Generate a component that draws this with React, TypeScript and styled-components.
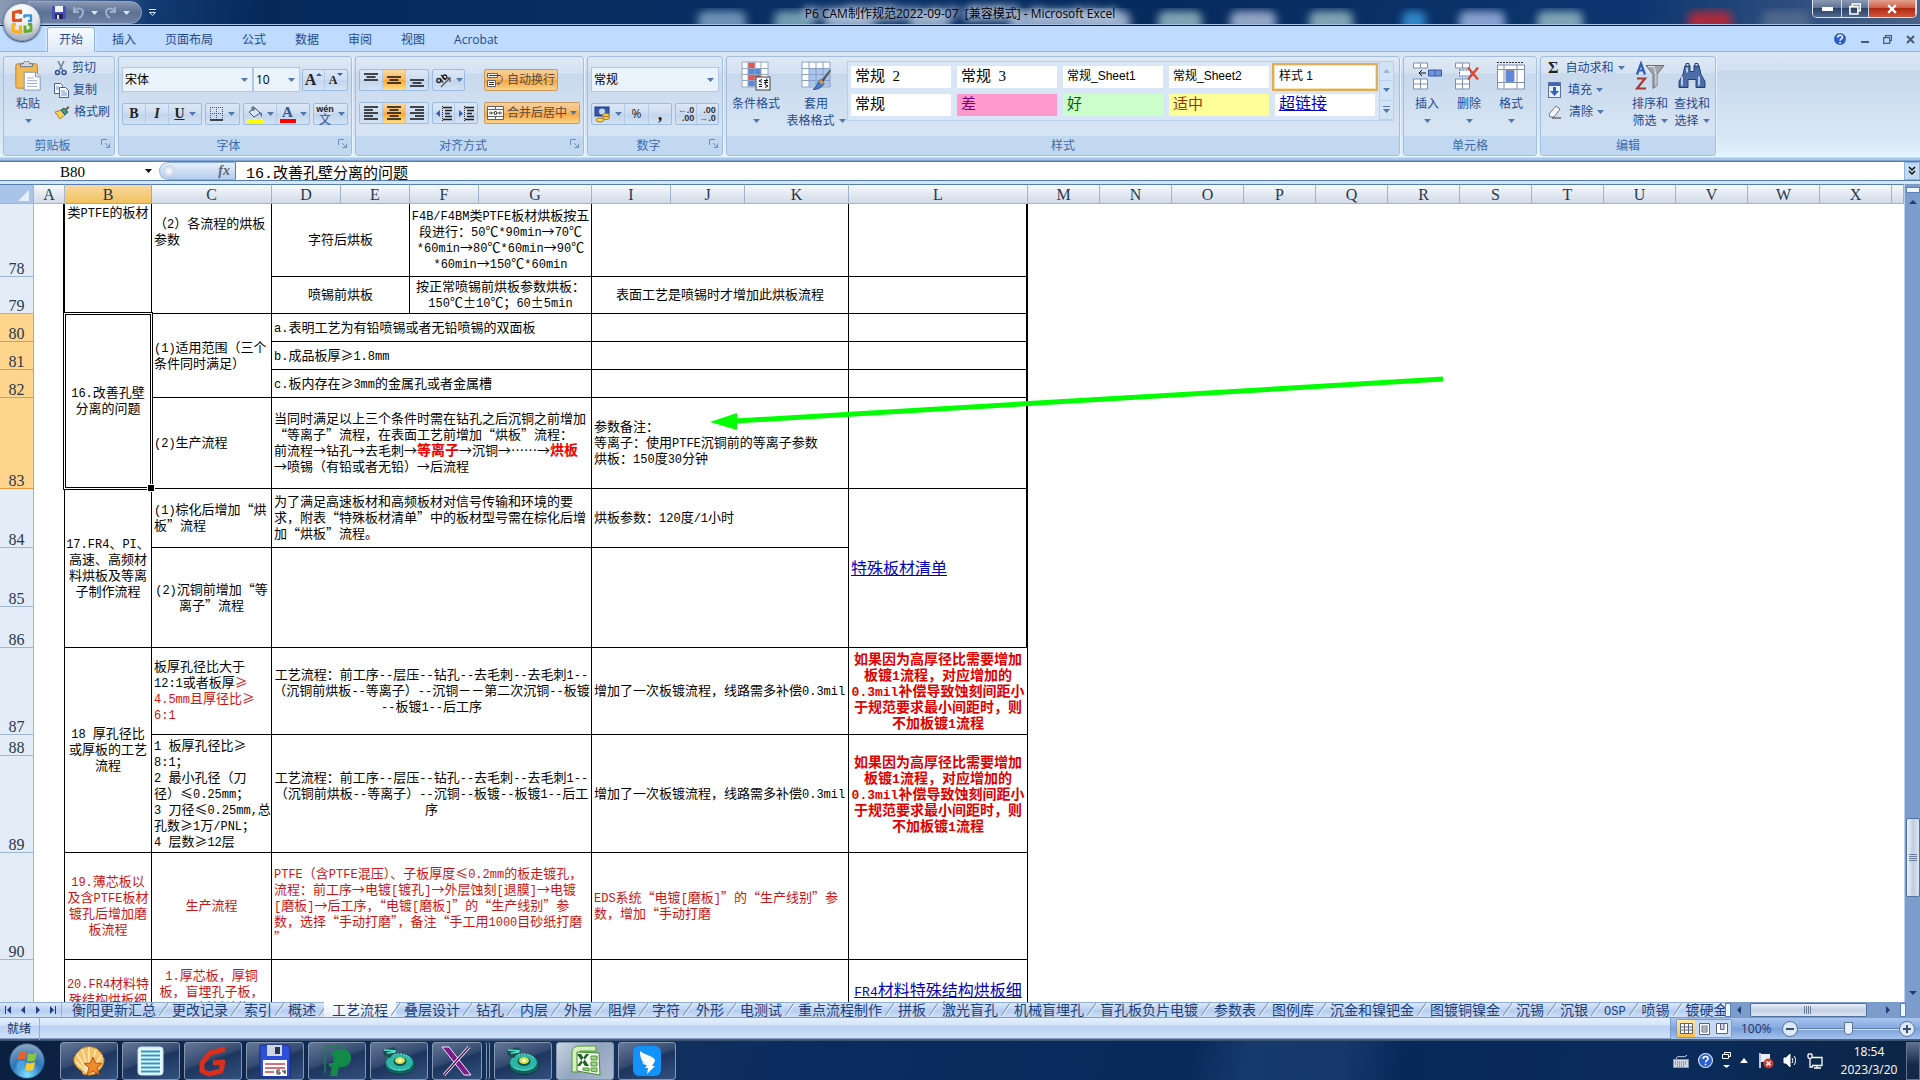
import React from "react";
import styled, { createGlobalStyle, css } from "styled-components";

const UI = `"Open Sans", "Noto Sans CJK SC", sans-serif`;
const SONG = `"Noto Sans CJK SC", sans-serif`;
const MONO = `"Liberation Mono", "Noto Sans CJK SC", monospace`;
const SERIF = `"Liberation Serif", "Noto Sans CJK SC", serif`;
const BLUE = "#1e4a94";

const Global = createGlobalStyle`
  * { box-sizing: border-box; }
  html, body, #root { height: 100%; }
  body { margin: 0; overflow: hidden; font: 12px/16px ${UI}; background: #fff; }
  button, input, select { font: inherit; color: inherit; margin: 0; padding: 0; border: 0; background: none; border-radius: 0; outline: 0; }
  button { cursor: default; }
  svg { display: block; flex: none; }
`;

const Screen = styled.div`
  height: 100vh;
  display: flex;
  flex-direction: column;
  overflow: hidden;
  white-space: nowrap;
`;

/* ---------- title bar ---------- */

const TitleBar = styled.header`
  position: relative;
  flex: none;
  height: 26px;
  display: flex;
  align-items: center;
  justify-content: center;
  overflow: hidden;
  background: linear-gradient(100deg, #8c9cb4 0, #5f789f 60px, #123a72 150px, #06295a 260px, #0b3066 45%, #072a5c 60%, #0c3570 85%, #4a6388 100%);
  border-bottom: 1px solid #10203a;
  box-shadow: inset 0 -1px #a9c4e4;
`;
const Blurs = styled.svg`
  position: absolute;
  inset: 0;
`;
const Title = styled.h1`
  position: relative;
  margin: 0;
  padding-top: 2px;
  font: 12px/16px ${UI};
  white-space: pre;
  color: #000;
  text-shadow: 0 0 6px #dfe8f4, 0 0 8px #c8d6ea, 0 0 12px #b5c7e0, 0 0 12px #b5c7e0;
`;
const QuickBar = styled.nav`
  position: absolute;
  left: 28px;
  top: 1px;
  height: 23px;
  width: 114px;
  padding-left: 23px;
  display: flex;
  align-items: center;
  gap: 6px;
  border: 1px solid #93a5c0;
  border-radius: 0 12px 12px 0;
  background: linear-gradient(#8797b3, #5d7194 50%, #6e82a4);
  color: #dbe5f3;
`;
const QuickMore = styled.button`
  position: absolute;
  left: 148px;
  top: 9px;
`;
const Bare = styled.button`
  display: flex;
  align-items: center;
  justify-content: center;
`;
const OfficeButton = styled.button`
  position: absolute;
  z-index: 3;
  left: 3px;
  top: 3px;
  width: 38px;
  height: 38px;
  display: grid;
  place-items: center;
  border-radius: 50%;
  border: 1px solid #7f8ea8;
  background: radial-gradient(circle at 50% 20%, #fff, #e3e7ee 50%, #a9b2c2 80%, #eef2f8);
  box-shadow: 0 1px 2px #1a2c4c;
`;
const WindowButtons = styled.div`
  position: absolute;
  right: 3px;
  top: 0;
  height: 18px;
  display: grid;
  grid-template-columns: 29px 27px 47px;
  border: 1px solid #dfe6f0;
  border-top: 0;
  border-radius: 0 0 5px 5px;
  overflow: hidden;
`;
const WinBtn = styled.button<{ $close?: boolean }>`
  display: grid;
  place-items: center;
  border-right: 1px solid #cbd5e4;
  background: ${(p) => (p.$close ? "linear-gradient(#e2a08f, #cf6048 45%, #b02a12 50%, #d0573c)" : "linear-gradient(#8a9ab4, #5e7293 45%, #2b4268 50%, #50688e)")};
`;

/* ---------- ribbon ---------- */

const TabRow = styled.nav`
  flex: none;
  height: 26px;
  display: flex;
  align-items: flex-end;
  gap: 5px;
  padding: 0 5px 0 47px;
  background: #bfdbff;
  color: ${BLUE};
  box-shadow: inset 0 -1px #8db2e3;
`;
const Tab = styled.button<{ $on?: boolean }>`
  height: 25px;
  border: 1px solid transparent;
  border-bottom: 0;
  padding: 0 11px;
  ${(p) =>
    p.$on &&
    css`
      border-color: #8db2e3;
      border-radius: 3px 3px 0 0;
      background: linear-gradient(#f7fbff, #dfeaf8);
      box-shadow: 0 0 3px #fff;
    `}
`;
const TabTools = styled.div`
  margin-left: auto;
  height: 26px;
  display: flex;
  align-items: center;
  gap: 14px;
  color: #4b5a72;
`;
const Ribbon = styled.section`
  flex: none;
  height: 110px;
  padding: 4px 3px 6px;
  display: flex;
  gap: 3px;
  color: ${BLUE};
  background: linear-gradient(#dbe6f4 0, #d2e0f1 18px, #c7d8ed 19px, #d9e8f6 88px, #e3f5fd 105px, #a9c6ea 106px, #a9c6ea 108px, #567db1 109px);
`;
const Group = styled.section<{ $w?: number }>`
  flex: ${(p) => (p.$w ? `0 1 ${p.$w}px` : "0 0 auto")};
  display: flex;
  flex-direction: column;
  border: 1px solid #a4bfde;
  border-radius: 3px;
  background: linear-gradient(#dfe9f5 0, #d4e1f1 16px, #c8d9ed 17px, #d8e5f4 78px);
  overflow: hidden;
  box-shadow: 1px 0 #e9f2fc;
`;
const GroupBody = styled.div<{ $gap?: number; $pad?: string }>`
  flex: 1;
  min-height: 0;
  display: flex;
  gap: ${(p) => p.$gap || 0}px;
  padding: ${(p) => p.$pad || "0"};
`;
const GroupName = styled.footer`
  flex: none;
  height: 19px;
  display: flex;
  align-items: center;
  background: #c1d8f0;
  color: #3e6aaa;
  svg { margin: 0 4px 4px 0; }
  span { flex: 1; text-align: center; }
`;
const Stack = styled.div<{ $gap?: number; $grow?: boolean }>`
  display: flex;
  flex-direction: column;
  gap: ${(p) => p.$gap || 0}px;
  ${(p) => p.$grow && "flex: 1;"}
`;
const Line = styled.div<{ $gap?: number; $h?: number; $between?: boolean }>`
  display: flex;
  align-items: center;
  gap: ${(p) => p.$gap || 0}px;
  ${(p) => p.$h && `height: ${p.$h}px;`}
  ${(p) => p.$between && "justify-content: space-between;"}
`;
const BigButton = styled.button<{ $w: number }>`
  width: ${(p) => p.$w}px;
  height: 76px;
  padding-top: 4px;
  display: flex;
  flex-direction: column;
  align-items: center;
  gap: 4px;
  > svg { height: 30px; margin-bottom: 2px; }
  i { flex: none; font-style: normal; display: flex; align-items: center; gap: 4px; height: 13px; line-height: 13px; }
`;
const SmallButton = styled.button`
  height: 22px;
  display: flex;
  align-items: center;
  gap: 4px;
`;
const Combo = styled.label<{ $w: number }>`
  width: ${(p) => p.$w}px;
  height: 25px;
  display: grid;
  align-items: center;
  border: 1px solid #b1c7e3;
  background: #eaf2fb;
  color: #000;
  select { grid-area: 1 / 1; appearance: none; width: 100%; height: 23px; padding: 0 2px; }
  svg { grid-area: 1 / 1; justify-self: end; margin-right: 4px; pointer-events: none; }
`;
const Buttons = styled.div`
  display: flex;
  height: 22px;
  border: 1px solid #9ebbe0;
  border-radius: 2px;
  background: linear-gradient(#dbe7f6, #cddcf0 50%, #c2d5ed 51%, #d3e2f4);
`;
const Tool = styled.button<{ $w: number; $on?: boolean }>`
  width: ${(p) => p.$w}px;
  display: flex;
  align-items: center;
  justify-content: center;
  gap: 4px;
  color: #222;
  &:not(:last-child) { border-right: 1px solid #b4cbe8; }
  ${(p) => p.$on && "background: linear-gradient(#fcd9a0, #fbb45a 50%, #fda530 51%, #fee08a);"}
`;
const SizeTool = styled(Tool)`
  gap: 0;
  svg { align-self: flex-start; margin-top: 3px; }
`;
const Glyph = styled.span<{ $size?: number; $italic?: boolean; $u?: boolean; $c?: string }>`
  font: ${(p) => (p.$italic ? "italic " : "")}bold ${(p) => p.$size || 14}px/16px ${SERIF};
  color: ${(p) => p.$c || "#222"};
  ${(p) => p.$u && "text-decoration: underline;"}
`;
const Ruby = styled.span`
  display: grid;
  justify-items: center;
  font: bold 9px/8px "Liberation Sans", sans-serif;
  b { font: 12px/11px ${SONG}; color: #2c4fa6; }
`;
const Toggle = styled.button`
  height: 22px;
  display: flex;
  align-items: center;
  gap: 3px;
  padding: 0 2px;
  border: 1px solid #c69b62;
  border-radius: 2px;
  background: linear-gradient(#f6cf9c, #f7b868 50%, #f5a540 51%, #fbd187);
  color: #5b4a3a;
`;
const VRule = styled.span`
  width: 1px;
  height: 56px;
  background: #9ebbe0;
`;
const Gallery = styled.div`
  flex: 1;
  height: 60px;
  margin-top: 4px;
  display: flex;
  border: 1px solid #b9d0ed;
  background: #d8e6f7;
`;
const Tiles = styled.div`
  flex: 1;
  display: grid;
  grid-template-columns: repeat(5, 1fr);
  grid-template-rows: 22px 22px;
  gap: 6px;
  padding: 4px 4px 3px 3px;
`;
const Tile = styled.button<{ $bg?: string; $c?: string; $size?: number; $on?: boolean; $u?: boolean }>`
  height: 22px;
  padding: 0 4px 2px;
  text-align: left;
  background: ${(p) => p.$bg || "#fff"};
  color: ${(p) => p.$c || "#000"};
  font: ${(p) => p.$size || 15}px/18px ${(p) => (p.$size === 12 ? `"Liberation Sans", ${SONG}` : SERIF)};
  word-spacing: normal;
  ${(p) => p.$u && "text-decoration: underline;"}
  ${(p) => p.$on && "box-shadow: 0 0 0 1px #fbe3b0, 0 0 0 3px #e3ab52;"}
`;
const GalleryScroll = styled.div`
  width: 14px;
  display: grid;
  grid-template-rows: repeat(3, 1fr);
  border-left: 1px solid #b9d0ed;
  button { display: grid; place-items: center; border-bottom: 1px solid #b9d0ed; background: #d3e3f6; }
`;

/* ---------- formula bar ---------- */

const FormulaBar = styled.div`
  flex: none;
  height: 22px;
  display: flex;
  padding-bottom: 4px;
  background: linear-gradient(#fff 18px, #567db1 18px, #567db1 19px, #d6e6fa 19px);
`;
const NameBox = styled.label`
  width: 159px;
  display: flex;
  align-items: center;
  input { width: 145px; height: 18px; padding: 2px 0 0 0; text-align: center; font: 15px/16px ${SERIF}; }
`;
const FxPill = styled.div`
  width: 77px;
  height: 18px;
  padding: 0 5px 0 3px;
  display: flex;
  align-items: center;
  justify-content: space-between;
  border-radius: 9px 0 0 9px;
  border: 1px solid #8db2e3;
  border-right-color: #567db1;
  background: linear-gradient(#e8f0fb, #b4cdec);
  &::before { content: ""; width: 12px; height: 12px; border-radius: 50%; background: radial-gradient(#fff, #a9bfdd); }
`;
const FormulaInput = styled.input`
  && { flex: 1; height: 18px; padding: 2px 0 0 10px; font: 15px/16px ${MONO}; }
`;
const Expand = styled.button`
  && { width: 16px; height: 18px; display: grid; place-items: center; background: #c3d8f1; border: 1px solid #8db2e3; }
`;

/* ---------- sheet ---------- */

const Work = styled.main`
  flex: 1;
  min-height: 0;
  display: flex;
`;
const GridArea = styled.div`
  position: relative;
  flex: 1;
  min-width: 0;
  overflow: hidden;
  background: #fff;
`;
const Sheet = styled.table`
  width: 100%;
  table-layout: fixed;
  border-collapse: separate;
  border-spacing: 0;
  font: 13px/16px ${SONG};
  color: #000;
`;
const ColHead = styled.th<{ $on?: boolean }>`
  height: 20px;
  padding: 2px 0 0;
  overflow: hidden;
  font: 16px/16px ${SERIF};
  color: #27384f;
  border: solid #9eb6ce;
  border-width: 1px 1px 1px 0;
  border-top-color: #567db1;
  background: ${(p) => (p.$on ? "linear-gradient(#f9d99f, #f1c15f)" : "linear-gradient(#f8fafc, #dfe6ef 60%, #d3dbe9)")};
  ${(p) => p.$on && "border-right-color: #f29536; border-bottom-color: #f29536;"}
`;
const Corner = styled(ColHead)`
  background: #a9c4e9;
  svg { margin: 0 4px 0 auto; }
`;
const RowHead = styled.th<{ $on?: boolean; $h: number }>`
  height: ${(p) => p.$h}px;
  padding: 0;
  vertical-align: bottom;
  font: 16px/15px ${SERIF};
  color: #27384f;
  border-right: 1px solid #9eb6ce;
  border-bottom: 1px solid #9eb6ce;
  background: #e4ecf7;
  ${(p) => p.$on && "background: #ffd58d; border-color: #f29536;"}
`;
const Cell = styled.td<{ $align?: string; $top?: number; $red?: boolean; $bold?: boolean; $thick?: boolean; $plain?: boolean }>`
  position: relative;
  padding: ${(p) => p.$top || 0}px 0 2px ${(p) => (p.$align === "center" ? 0 : 2)}px;
  text-align: ${(p) => p.$align || "left"};
  vertical-align: ${(p) => (p.$top !== undefined ? "top" : "middle")};
  border-right: 1px solid #000;
  border-bottom: 1px solid #000;
  white-space: pre;
  ${(p) => p.$red && "color: #cc1414;"}
  ${(p) => p.$bold && "font-weight: 700; font-size: 14px; color: #e00000;"}
  ${(p) => p.$thick && "border-right-width: 2px;"}
  ${(p) => p.$plain && "border-bottom: 0; border-right: 0;"}
`;
const Gutter = styled.td<{ $thick?: boolean }>`
  padding: 0;
  border-right: ${(p) => (p.$thick ? 2 : 1)}px solid #000;
`;
const Half = styled.span<{ $size: number }>`
  font-family: "Liberation Mono", monospace;
  font-size: ${(p) => p.$size}px;
  line-height: 1px;
`;
const Hot = styled.b`
  font-size: 14px;
  line-height: 1px;
  color: #f00000;
`;
const Red = styled.span`
  color: #cc1414;
`;
const CellLink = styled.a`
  font-size: 16px;
  line-height: 18px;
  color: #0000b8;
  text-decoration: underline;
`;
/* Double frame of the active range: dark, white, dark. */
const Selection = styled.div`
  position: absolute;
  z-index: 1;
  inset: -2px;
  border: 1px solid #000;
  box-shadow: inset 0 0 0 1px #fff, inset 0 0 0 2px #000;
  pointer-events: none;
  &::after { content: ""; position: absolute; right: -3px; bottom: -3px; width: 6px; height: 6px; background: #000; border: 1px solid #fff; }
`;
const Arrow = styled.svg`
  position: absolute;
  left: 710px;
  top: 190px;
  z-index: 2;
  pointer-events: none;
`;

const VScroll = styled.div`
  flex: none;
  width: 16px;
  display: flex;
  flex-direction: column;
  align-items: center;
  padding: 3px 0 5px;
  border-left: 1px solid #b8d0f0;
  background: #7c9dcc;
`;
const SplitMark = styled.span<{ $v?: boolean }>`
  flex: none;
  width: ${(p) => (p.$v ? 6 : 14)}px;
  height: ${(p) => (p.$v ? 14 : 6)}px;
  border: 1px solid #5d82b8;
  background: #f0f6ff;
`;
const Thumb = styled.button<{ $h?: boolean }>`
  && {
    display: grid;
    place-items: center;
    border: 1px solid #5170a0;
    border-radius: 2px;
    ${(p) =>
      p.$h
        ? "width: 117px; height: 14px; background: linear-gradient(#e9eff8, #c2cfe3 50%, #dbe4f1);"
        : "width: 14px; height: 79px; background: linear-gradient(90deg, #edf2fa, #bfcde2 50%, #dbe4f1);"}
  }
`;
const Space = styled.span<{ $n: number }>`
  flex: ${(p) => p.$n};
`;

const SheetTabs = styled.nav`
  flex: none;
  height: 16px;
  display: flex;
  background: linear-gradient(#8fb0de 1px, #dce9fa 1px, #b4cdf0 60%, #cfe0f7);
  border-bottom: 1px solid #7b9cc8;
  color: #1c3f7c;
`;
const NavArrows = styled.div`
  width: 62px;
  padding: 0 5px;
  display: flex;
  align-items: center;
  justify-content: space-between;
  border-right: 1px solid #8fb0de;
`;
const TabStrip = styled.div`
  flex: 1;
  min-width: 0;
  display: flex;
  overflow: hidden;
  padding-left: 2px;
`;
const SheetTab = styled.button<{ $on?: boolean }>`
  && {
    flex: none;
    position: relative;
    height: 15px;
    padding: 0 8px;
    font: 14px/15px ${SONG};
    ${(p) => p.$on && "background: linear-gradient(#fff, #e4eefb);"}
  }
  &::after { content: ""; position: absolute; right: 0; top: 0; width: 1px; height: 15px; background: #7b98c4; transform: rotate(35deg); box-shadow: 1px 0 #f4f9ff; }
`;
const HScroll = styled.div`
  flex: none;
  width: 195px;
  height: 15px;
  padding-right: 14px;
  display: flex;
  align-items: center;
  background: #7c9dcc;
`;

const StatusBar = styled.footer`
  flex: none;
  height: 22px;
  display: flex;
  align-items: stretch;
  background: linear-gradient(#e4effd 0, #d5e5fa 7px, #b9d1f3 8px, #cfe1f8 20px, #3f5f92 21px);
  color: #1c3566;
`;
const Ready = styled.span`
  width: 40px;
  padding: 3px 0 0 7px;
  border-right: 1px solid #90b0dc;
`;
const StatusRight = styled.div`
  margin-left: auto;
  width: 250px;
  height: 21px;
  display: flex;
  align-items: center;
  padding: 0 5px;
  border-left: 1px solid #7b9cc8;
  background: linear-gradient(#a8c5ef, #86abe0 45%, #7aa0d8 50%, #a3c2ee);
`;
const Views = styled.div`
  display: flex;
  border: 1px solid #7b9cc8;
  border-radius: 2px;
  margin-right: 9px;
  button { width: 18px; height: 17px; display: grid; place-items: center; background: #c6daf5; }
  button:first-child { background: linear-gradient(#fce8a8, #fbbf4c); }
`;
const Percent = styled.span`
  min-width: 41px;
`;
const Round = styled.button`
  && {
    flex: none;
    width: 16px;
    height: 16px;
    display: grid;
    place-items: center;
    border: 1px solid #5b7199;
    border-radius: 50%;
    background: #dbe8fa;
  }
`;
const Zoom = styled.input`
  && {
    flex: 1;
    min-width: 0;
    appearance: none;
    height: 16px;
    background: linear-gradient(transparent 7px, #5f7fb4 7px, #5f7fb4 8px, #d5e5fb 8px, #d5e5fb 9px, transparent 9px);
  }
  &::-webkit-slider-thumb {
    appearance: none;
    width: 9px;
    height: 13px;
    border: 1px solid #5b7199;
    border-radius: 1px 1px 5px 5px;
    background: #e7f0fc;
  }
`;

/* ---------- taskbar ---------- */

const TaskBar = styled.footer`
  flex: none;
  height: 40px;
  display: flex;
  align-items: center;
  gap: 4px;
  padding-left: 8px;
  background: linear-gradient(100deg, #0b1f40 0, #16325e 30%, #0a2c5e 42%, #082a5b 62%, #173a6c 65%, #15376a 70%, #07295a 73%, #0a2b5b 88%, #0d2444 100%);
  border-top: 1px solid #3c5474;
  color: #fff;
`;
const Start = styled.button`
  && { width: 38px; height: 38px; margin-right: 10px; display: grid; place-items: center; }
`;
const Task = styled.button<{ $on?: boolean; $w?: number }>`
  && {
    width: ${(p) => p.$w || 58}px;
    height: 38px;
    display: grid;
    place-items: center;
    border: 1px solid #8595ae;
    border-radius: 3px;
    background: ${(p) => (p.$on ? "linear-gradient(135deg, #c9d3e0, #93a6c0 50%, #a9b9cf)" : "linear-gradient(160deg, #65789a, #33496f 45%, #1d365f 50%, #33507f)")};
  }
`;
const TaskStack = styled.div`
  display: flex;
  width: 58px;
  border-right: 1px solid #8595ae;
  border-radius: 3px;
  &::after { content: ""; width: 4px; border-right: 1px solid #8595ae; border-radius: 3px; }
`;
const Tray = styled.div`
  margin-left: auto;
  height: 39px;
  display: flex;
  align-items: center;
  gap: 9px;
`;
const Clock = styled.time`
  width: 74px;
  text-align: center;
  font: 12px/18px ${UI};
`;
const ShowDesktop = styled.button`
  && { width: 14px; height: 38px; border: 1px solid #60738f; background: linear-gradient(#5d6f8b, #14294a 60%); }
`;

/* ---------- icons ---------- */

const Caret = ({ c = "#5277ad" }: { c?: string }) => (
  <svg width="7" height="4" viewBox="0 0 7 4"><path d="M0 0h7L3.500 4z" fill={c} /></svg>
);
const Dot = ({ up }: { up?: boolean }) => (
  <svg width="6" height="3" viewBox="0 0 6 3"><path d={up ? "M0 3h6L3 0z" : "M0 0h6L3 3z"} fill="#2f5eb4" /></svg>
);
/* Down arrow standing alone under a large button's label. */
const Drop = styled.span`
  display: block;
  flex: none;
  height: 13px;
  padding-top: 5px;
`;
const Launcher = () => (
  <svg width="9" height="9" viewBox="0 0 9 9" fill="none" stroke="#6d8fbf"><path d="M.5 6V.5H6M4 4l4 4M8.500 4.500v4h-4" /></svg>
);
const OfficeLogo = () => (
  <svg width="24" height="26" viewBox="0 0 24 26" fill="none" strokeWidth="3.200" strokeLinejoin="round">
    <path d="M10.500 9.500v2h-7v-8l7-1.500v3" stroke="#e2501c" />
    <path d="M14.500 9V6.500H21v5.500h-3" stroke="#3a94dc" strokeWidth="2.400" />
    <path d="M6 15.500H3V22l7.500 1.500v-7" stroke="#fbb216" />
    <path d="M18 15.500h3v6l-6 1v-6" stroke="#5fae2b" strokeWidth="2.800" />
  </svg>
);
const Save = () => (
  <svg width="14" height="15" viewBox="0 0 14 15"><path d="M0 1h13l1 1v12H1l-1-1z" fill="#4a4fb5" /><path d="M3 1h8v6H3z" fill="#eef2fb" /><path d="M3 9h8v5H3z" fill="#22265c" /><path d="M5 10h2v4H5z" fill="#dfe5f5" /></svg>
);
const Undo = ({ flip }: { flip?: boolean }) => (
  <svg width="13" height="13" viewBox="0 0 13 13" fill="none" stroke="#9db0ce" strokeWidth="2" transform={flip ? "scale(-1 1)" : undefined}><path d="M2 1v5h5M2 6c3-5 9-4 9 0 0 3-2 5-4 6" /></svg>
);
const Paste = () => (
  <svg width="28" height="32" viewBox="0 0 28 32"><rect x="1" y="3" width="23" height="26" rx="2" fill="#f0b952" stroke="#b98326" /><path d="M6 6V3h3c0-4 7-4 7 0h3v3z" fill="#d6d9df" stroke="#686d77" /><path d="M10 12h12l5 5v14H10z" fill="#fff" stroke="#8294b5" /><path d="M22 12v5h5" fill="#d9e4f5" stroke="#8294b5" /><path d="M13 18h7M13 21h11M13 24h11M13 27h11" stroke="#94a9cc" /></svg>
);
const Cut = () => (
  <svg width="14" height="16" viewBox="0 0 14 16" fill="none" stroke="#2d4f8f" strokeWidth="1.500"><path d="M4 1l4.500 9M10 1L5.500 10" stroke="#6d7f9d" /><circle cx="3.500" cy="12.500" r="2" /><circle cx="10" cy="12.500" r="2" /></svg>
);
const Copy = () => (
  <svg width="15" height="15" viewBox="0 0 15 15" fill="#fff" stroke="#3d62a5"><path d="M.5.500h6l2 2v8h-8z" /><path d="M5.500 4.500h6l3 3v7h-9z" /><path d="M7 8h4M7 10h6M7 12h6M2 4h3M2 6h3" stroke="#6f94cf" /></svg>
);
const Brush = () => (
  <svg width="16" height="15" viewBox="0 0 16 15"><path d="M1 7l6-2 4 5-5 4z" fill="#f3cf62" stroke="#a98227" /><path d="M7 5l3-2 4 4-3 3z" fill="#3f9b8d" stroke="#23585a" /><path d="M11 4l3-3 1.500 1.500-3 3z" fill="#8a5a2b" /></svg>
);
const Lines = ({ v }: { v: "t" | "m" | "b" | "l" | "c" | "r" }) => {
  const rows = { t: [2, 5, 8], m: [5, 8, 11], b: [8, 11, 14], l: [2, 5, 8, 11, 14], c: [2, 5, 8, 11, 14], r: [2, 5, 8, 11, 14] }[v];
  return (
    <svg width="15" height="16" viewBox="0 0 15 16" stroke="#111" strokeWidth="1.500">
      {rows.map((y, i) => {
        const w = i % 2 ? 9 : 14;
        const x = v === "l" ? 0 : v === "r" ? 14 - w : (14 - w) / 2;
        return <path key={y} d={`M${x} ${y}h${w}`} />;
      })}
    </svg>
  );
};
const Orient = () => (
  <svg width="17" height="17" viewBox="0 0 17 17" fill="none" stroke="#222" strokeWidth="1.300"><circle cx="3.800" cy="8.500" r="2" /><path d="M5 6.500l3 4M6 3l5 5" /><circle cx="9.800" cy="5" r="2" /><path d="M6 15l9-9M15 10V6h-4" stroke="#555" /></svg>
);
const WrapIcon = () => (
  <svg width="17" height="16" viewBox="0 0 17 16" fill="none" stroke="#5a6170"><path d="M.5 1.500h10v4H.500zM.5 8.500h8v6h-8z" fill="#fff" /><path d="M2 3.500h11M2 10.500h5M2 12.500h5" stroke="#333" /><path d="M13 3.500c3 0 3 6 0 8l-3 0m2-2l-2 2 2 2" stroke="#3a62ad" /></svg>
);
const MergeIcon = () => (
  <svg width="17" height="16" viewBox="0 0 17 16" fill="#fff" stroke="#5a6170"><path d="M.5 1.500h16v13H.500zM.5 4.500h16M.5 11.500h16M8.500 1.500v3M8.500 11.500v3" /><path d="M2 8h3M12 8h3M4 6.500L5.500 8 4 9.500M13 6.500L11.500 8 13 9.500" fill="none" stroke="#333" /><circle cx="8.500" cy="8" r="1.500" fill="none" stroke="#111" /></svg>
);
const Indent = ({ out }: { out?: boolean }) => (
  <svg width="16" height="15" viewBox="0 0 16 15" stroke="#222"><path d="M7 1.500h9M9 4.500h7M9 7.500h5M9 10.500h7M7 13.500h9" strokeWidth="1.500" /><path d="M6.500 0v15" strokeDasharray="1 1" /><path d={out ? "M4 4L0 7.500 4 11z" : "M1 4l4 3.500L1 11z"} fill="#2d5fc4" stroke="none" /></svg>
);
const BorderIcon = () => (
  <svg width="14" height="14" viewBox="0 0 14 14" stroke="#555"><path d="M.5 0v13M6.500 0v13M12.500 0v13M0 .5h13M0 6.500h13" strokeDasharray="1 1" /><path d="M0 13h13" stroke="#111" strokeWidth="1.500" /></svg>
);
const Fill = () => (
  <svg width="16" height="17" viewBox="0 0 16 17"><path d="M2 6l6-4 5 5-6 4z" fill="#dce5f2" stroke="#46566f" /><path d="M5 5V1h2v4" fill="none" stroke="#46566f" /><path d="M13 6c3 1 2 4 1 5z" fill="#3a62ad" /><path d="M0 13h16v4H0z" fill="#ff0" /></svg>
);
const FontColor = styled.span`
  width: 16px;
  height: 18px;
  border-bottom: 4px solid #f00;
  text-align: center;
  font: bold 15px/15px ${SERIF};
  color: #35568f;
`;
const Money = () => (
  <svg width="17" height="17" viewBox="0 0 17 17"><rect x="1" y="1" width="14" height="9" fill="#3457a6" stroke="#233f80" /><ellipse cx="8" cy="5.500" rx="3" ry="3" fill="#c6d4f0" /><ellipse cx="12" cy="9" rx="3.500" ry="1.500" fill="#fbd55a" stroke="#b27a10" /><ellipse cx="12" cy="12" rx="3.500" ry="1.500" fill="#fbd55a" stroke="#b27a10" /><ellipse cx="6" cy="14" rx="4" ry="2" fill="#fbd55a" stroke="#b27a10" /></svg>
);
const Decimals = styled.span`
  font: bold 9px/8px "Liberation Sans", sans-serif;
  text-align: right;
  white-space: pre;
  color: #333;
  b { color: #2f62c4; }
`;
const CondFmt = () => (
  <svg width="30" height="29" viewBox="0 0 30 29"><path d="M1 .5h26v25H1z" fill="#fff" /><path d="M7 1h7v6H7zM7 13h13v6H7z" fill="#e8574a" /><path d="M7 7h13v6H7zM7 19h7v6H7z" fill="#5b87dc" /><path d="M1 .5h26v25H1zM1 7h26M1 13h26M1 19h26M7 .5v25M14 .5v25M20 .5v25" fill="none" stroke="#94a6c4" /><rect x="15" y="15.500" width="14" height="13" fill="#f4f6fa" stroke="#444" /><path d="M21 18l-3 1.500 3 1.500M18 23h3M18 25h3M23 19h4M23 21h4M26 17l-2 6M24 23l3 1.500-3 1.500" fill="none" stroke="#111" /></svg>
);
const TableFmt = () => (
  <svg width="30" height="29" viewBox="0 0 30 29"><path d="M1 .5h28v25H1z" fill="#fff" /><path d="M8 7h21v18H8z" fill="#a9c4ee" /><path d="M1 .5h28v25H1zM1 7h28M1 13h28M1 19h28M8 .5v25M15 .5v25M22 .5v25" fill="none" stroke="#8aa0c6" /><path d="M29 8L20 19l2 2L30 9z" fill="#555" /><path d="M20 18l3 4c-2 2-3 6-11 6 5-3 4-8 8-10z" fill="#4b7bd0" stroke="#2f4f8c" /><path d="M20 18l3 3-2 2-3-3z" fill="#d69a3c" /></svg>
);
const CellsIcon = ({ kind }: { kind: "ins" | "del" | "fmt" }) => (
  <svg width="30" height="29" viewBox="0 0 30 29" fill="#fff" stroke="#7e8fae">
    {kind === "fmt" ? (
      <>
        <path d="M1.500 3.500h27v24h-27zM1.500 8h27M1.500 21h27M8 3.500v24M21 3.500v24" /><path d="M10 9h8v11h-8z" fill="#5b87dc" /><path d="M1 1h27" stroke="#333" strokeDasharray="2 1" />
      </>
    ) : (
      <>
        <path d="M1.500 1.500h14v5h-14zM8.500 1.500v5M1.500 17.500h14v10h-14zM8.500 17.500v10M1.500 22.500h14" />
        {kind === "ins" ? (
          <><path d="M16.500 8.500h13v6h-13zM23 8.500v6" fill="#6d93de" stroke="#38589c" /><path d="M14 11.500H7m3-3l-3 3 3 3" fill="none" stroke="#111" /></>
        ) : (
          <><path d="M5.500 8.500h11v6h-11z" strokeDasharray="2 1" stroke="#3a62ad" /><path d="M14 6l10 12M24 6L14 18" stroke="#e2432a" strokeWidth="2.200" /></>
        )}
      </>
    )}
  </svg>
);
const FillDown = () => (
  <svg width="13" height="16" viewBox="0 0 13 16"><rect x=".5" y=".5" width="12" height="15" fill="#e8f0fc" stroke="#5b7199" /><path d="M1 1h11v3H1z" fill="#3a66c0" /><path d="M5 5h3v4h3l-4.500 5L2 9h3z" fill="#2f62c4" /></svg>
);
const Eraser = () => (
  <svg width="14" height="14" viewBox="0 0 14 14"><path d="M1 9l7-8 4 3-6 8H2z" fill="#f4f6fa" stroke="#6d7688" /><path d="M4 13h9" stroke="#333" /></svg>
);
const SortIcon = () => (
  <svg width="30" height="29" viewBox="0 0 30 29"><path d="M2 13L6 2l4 11M3.500 9h5" fill="none" stroke="#2f5eb4" strokeWidth="2.200" /><path d="M2 17h8L2 27h9" fill="none" stroke="#a43a32" strokeWidth="2.200" /><path d="M11 4h18l-7 9v11l-4 3V13z" fill="#a2a6ad" stroke="#6b6f78" /><path d="M13 5h6l2 8v11" fill="none" stroke="#e3e5e9" /></svg>
);
const Binoculars = () => (
  <svg width="28" height="29" viewBox="0 0 28 29" fill="#4c6da8" stroke="#263f70"><path d="M7 4h5v6h4V4h5l2 9 4 7v6h-9v-8h-8v8H1v-6l4-7z" /><path d="M8 2h3v3H8zM17 2h3v3h-3z" fill="#c0cfe9" /><path d="M4 15v9M21 15v9M9 6v5" stroke="#b9cbea" strokeWidth="2" /></svg>
);
const Help = ({ s = 14 }: { s?: number }) => (
  <svg width={s} height={s} viewBox="0 0 14 14"><circle cx="7" cy="7" r="6.500" fill="#2b5fd0" stroke="#dfe9fb" /><path d="M4.800 5.500c0-3 4.600-3 4.600-.2 0 1.600-2.300 1.700-2.300 3.400M7 10v1.500" fill="none" stroke="#fff" strokeWidth="1.500" /></svg>
);
const Restore = ({ c = "#4b5a72", s = 9 }: { c?: string; s?: number }) => (
  <svg width={s} height={s} viewBox="0 0 9 9" fill="none" stroke={c} strokeWidth="1.200"><path d="M2.500 2V.700h6v5H7M.7 2.700h6v5.600h-6z" /></svg>
);
const Cross = ({ c = "#4b5a72", s = 9 }: { c?: string; s?: number }) => (
  <svg width={s} height={s} viewBox="0 0 9 9" stroke={c} strokeWidth="2"><path d="M1 1l7 7M8 1L1 8" /></svg>
);
const Tri = ({ dir, bar }: { dir: "l" | "r" | "u" | "d"; bar?: boolean }) => {
  const d = { l: "M6 0v8L2 4z", r: "M2 0v8l4-4z", u: "M0 6h8L4 2z", d: "M0 2h8L4 6z" }[dir];
  return (
    <svg width="8" height="8" viewBox="0 0 8 8" fill="#1c3f7c"><path d={d} />{bar && <path d={dir === "l" ? "M0 0h1v8H0z" : "M7 0h1v8H7z"} />}</svg>
  );
};
const Grip = ({ h }: { h?: boolean }) => (
  <svg width="8" height="8" viewBox="0 0 8 8" stroke="#6d7f9d"><path d={h ? "M.5 0v8M2.500 0v8M4.500 0v8M6.500 0v8" : "M0 .5h8M0 2.500h8M0 4.500h8M0 6.500h8"} /></svg>
);

const Orb = () => (
  <svg width="38" height="38" viewBox="0 0 38 38">
    <defs><radialGradient id="orb" cx=".5" cy=".9" r=".9"><stop offset="0" stopColor="#7fe0ff" /><stop offset=".5" stopColor="#2b77b8" /><stop offset="1" stopColor="#8fa8c4" /></radialGradient></defs>
    <circle cx="19" cy="19" r="17.500" fill="url(#orb)" stroke="#1b3e68" />
    <path d="M11 11c3-2 5-2 7.500-.5l-1.200 7.500c-2-1.500-4-1.500-7.500 0z" fill="#e8622c" />
    <path d="M20 11.200c3 1.500 5 1 8.500-.5l-1.200 7.500c-3 1.500-5.500 1.500-8.500.3z" fill="#8cc63e" />
    <path d="M9.500 20c3-2 5-1.500 7.500-.3l-1.200 7.500c-2-1.500-4-1.500-7.500 0z" fill="#4aa3e8" />
    <path d="M18.500 20.500c3 1.500 5 1 8.500-.5l-1.200 7.500c-3 1.500-5.500 1.500-8.500.3z" fill="#fccb2f" />
  </svg>
);
const Shell = () => (
  <svg width="34" height="34" viewBox="0 0 34 34"><path d="M17 31l-6-1-1-3C5 24 1 19 2 14l3-5 4-4 5-2h6l5 2 4 4 3 6c0 6-3 11-8 13l-1 2z" fill="#f6c163" stroke="#c98a2c" /><path d="M17 30L5 10M17 30L10 5M17 30V3M17 30L24 5M17 30L30 11M17 30L3 17" stroke="#fdeac0" strokeWidth="1.500" /><path d="M21 13l2.500 6 6.500.5-5 4 2 7-6-3.500-6 3.500 2-7-5-4 6.500-.5z" fill="#f08a2c" stroke="#b7551a" /></svg>
);
const Notes = () => (
  <svg width="28" height="30" viewBox="0 0 28 30"><rect x="1" y="1" width="25" height="28" rx="3" fill="#e6f7ff" stroke="#bfe3f4" /><path d="M4 5.500h19M4 9.500h19M4 13.500h19M4 17.500h19M4 21.500h19M4 25.500h19" stroke="#2f97c4" strokeWidth="2" /></svg>
);
const RedG = () => (
  <svg width="30" height="32" viewBox="0 0 30 32" fill="none" stroke="#d8301c" strokeWidth="5" strokeLinejoin="round"><path d="M27 4L12 8 4 18v8l7 3 12-3 2-9-10 1" /></svg>
);
const Floppy = () => (
  <svg width="32" height="34" viewBox="0 0 32 34"><path d="M1 1h28l2 2v30H3l-2-2z" fill="#2f4fd8" stroke="#17298a" /><path d="M8 1h15v11H8z" fill="#cfd5e2" /><path d="M16 3h5v7h-5z" fill="#2b3552" /><path d="M4 16h24v16H4z" fill="#fff" /><path d="M6 20h20M6 24h20M6 28h9" stroke="#d0404c" strokeWidth="1.500" /><path d="M21 26h-3v4h3v-2h-3M24 26v2h3M26 26v4" fill="none" stroke="#333" /></svg>
);
const GreenP = () => (
  <svg width="32" height="32" viewBox="0 0 32 32"><path d="M14 5c10-3 16 1 16 8s-6 10-12 9l-2 9H9l2-9c-3 0-4-2-3-4h4l1-8-3 1c0-3 1-5 4-6z" fill="#148a4a" /><path d="M4 28V1h20v3" fill="none" stroke="#1c7d54" strokeWidth="1.500" /></svg>
);
const Disc = () => (
  <svg width="34" height="30" viewBox="0 0 34 30"><ellipse cx="18" cy="19" rx="15" ry="9.500" fill="#13625f" stroke="#0b3b3e" /><ellipse cx="17.500" cy="16.500" rx="14" ry="9" fill="#2fb5a6" stroke="#0d5b58" /><path d="M7 12c4-5 15-6 21 0M8 21c5 4 15 4 20 0" fill="none" stroke="#7fe6d4" strokeDasharray="2 1" /><ellipse cx="18" cy="15.500" rx="6.500" ry="4.500" fill="#0f5753" /><ellipse cx="18" cy="14.500" rx="5" ry="3.500" fill="#d9df4a" /><ellipse cx="18" cy="14.500" rx="2" ry="1.500" fill="#fff" /><path d="M1 4l11-3 3 3-7 8-6-2z" fill="#1d4f57" /><path d="M2 4l12 1M5 7l8-1" stroke="#5be0cc" strokeWidth="1.500" /></svg>
);
const BigX = () => (
  <svg width="32" height="32" viewBox="0 0 32 32"><path d="M1 2h7l22 28h-7z" fill="#7b1a8c" stroke="#f4eaf6" /><path d="M28 2L3 30" stroke="#fff" strokeWidth="3" /><path d="M28 2L3 30" stroke="#4b1058" strokeWidth="1.400" /></svg>
);
const ExcelIcon = () => (
  <svg width="32" height="32" viewBox="0 0 32 32"><path d="M3 27V8c0-5 3-7 8-7h16v5H11v21z" fill="#d6eec4" stroke="#4f9a35" /><path d="M8 7l22 1 1 22-23-4z" fill="#f3faef" stroke="#3f8a2a" /><path d="M22 11h6v4h-6zM22 17h6v4h-6zM22 23h6v4l-6-1zM14 23h6v3l-6-1z" fill="#a4cf8d" stroke="#4f9a35" /><path d="M8 9h4l8 12h-4zM20 9h-3L8 21h3z" fill="#1f5f22" /></svg>
);
const Wing = () => (
  <svg width="30" height="32" viewBox="0 0 30 32"><rect x="1" y="1" width="28" height="30" rx="6" fill="#1492fb" /><path d="M8 6c4 4 14 5 15 9 0 2-2 4-3 6h3l-8 8 1-6h-3l2-3c-3 0-4-1-5-3 1 .6 2 1 3 1-3-1-5-5-5-12z" fill="#fff" /></svg>
);

/* ---------- text helpers ---------- */

/* Latin runs take half-width cells beside the full-width characters. */
const T = ({ children, half = 12 }: { children: string; half?: number }) => (
  <>
    {children.split(/([\x20-\x7e]+)/).map((run, i) => (i % 2 ? <Half $size={half} key={i}>{run}</Half> : run))}
  </>
);

const COLS = [34, 31, 87, 120, 69, 69, 69, 113, 79, 74, 104, 179, 72, 72, 72, 72, 72, 72, 72, 72, 72, 72, 72, 72];
const LETTERS = "A B C D E F G I J K L M N O P Q R S T U V W X".split(" ");

const TABS = "衡阳更新汇总 更改记录 索引 概述 工艺流程 叠层设计 钻孔 内层 外层 阻焊 字符 外形 电测试 重点流程制作 拼板 激光盲孔 机械盲埋孔 盲孔板负片电镀 参数表 图例库 沉金和镍钯金 图镀铜镍金 沉锡 沉银 OSP 喷锡 镀硬金".split(" ");

const NOTE = "如果因为高厚径比需要增加\n板镀1流程，对应增加的\n0.3mil补偿导致蚀刻间距小\n于规范要求最小间距时，则\n不加板镀1流程";

const Named = ({ name, launch }: { name: string; launch?: boolean }) => (
  <GroupName><span>{name}</span>{launch && <Launcher />}</GroupName>
);

const BLOBS: [number, number, string][] = [
  [722, 48, "#6d93b5"], [794, 40, "#6f9db0"], [850, 50, "#8fa6c4"], [930, 40, "#8ba5c0"], [1040, 60, "#8ea4c4"],
  [1100, 60, "#9aadcb"], [1180, 44, "#7fa4b4"], [1253, 46, "#93a5c6"], [1331, 44, "#7fa4b4"], [1414, 24, "#2f86c8"],
  [1482, 46, "#86a0d0"], [1560, 46, "#7fa4b4"], [1710, 44, "#a82a3e"], [1786, 48, "#50688e"],
];

function RibbonBar() {
  return (
    <Ribbon>
      <Group $w={112}>
        <GroupBody $gap={4} $pad="0 0 0 2px">
          <BigButton $w={44}><Paste /><i>粘贴</i><Drop><Caret /></Drop></BigButton>
          <Stack>
            <SmallButton><Cut />剪切</SmallButton>
            <SmallButton><Copy />复制</SmallButton>
            <SmallButton><Brush />格式刷</SmallButton>
          </Stack>
        </GroupBody>
        <Named name="剪贴板" launch />
      </Group>

      <Group $w={234}>
        <GroupBody $pad="10px 3px 0">
          <Stack $gap={11} $grow>
            <Line $between $h={25}>
              <Line>
                <Combo $w={131}><select aria-label="字体"><option>宋体</option></select><Caret /></Combo>
                <Combo $w={47}><select aria-label="字号"><option>10</option></select><Caret /></Combo>
              </Line>
              <Buttons>
                <SizeTool $w={22}><Glyph $size={16}>A</Glyph><Dot up /></SizeTool>
                <SizeTool $w={22}><Glyph $size={12}>A</Glyph><Dot /></SizeTool>
              </Buttons>
            </Line>
            <Line $between $h={22}>
              <Buttons>
                <Tool $w={23}><Glyph>B</Glyph></Tool>
                <Tool $w={23}><Glyph $italic>I</Glyph></Tool>
                <Tool $w={32}><Glyph $u>U</Glyph><Caret /></Tool>
              </Buttons>
              <Buttons><Tool $w={33}><BorderIcon /><Caret /></Tool></Buttons>
              <Buttons>
                <Tool $w={33}><Fill /><Caret /></Tool>
                <Tool $w={32}><FontColor>A</FontColor><Caret /></Tool>
              </Buttons>
              <Buttons><Tool $w={33}><Ruby>wén<b>文</b></Ruby><Caret /></Tool></Buttons>
            </Line>
          </Stack>
        </GroupBody>
        <Named name="字体" launch />
      </Group>

      <Group $w={229}>
        <GroupBody $gap={3} $pad="12px 3px 0">
          <Stack $gap={11}>
            <Line $gap={3}>
              <Buttons>
                <Tool $w={23}><Lines v="t" /></Tool>
                <Tool $w={23} $on><Lines v="m" /></Tool>
                <Tool $w={22}><Lines v="b" /></Tool>
              </Buttons>
              <Buttons><Tool $w={31}><Orient /><Caret /></Tool></Buttons>
            </Line>
            <Line $gap={3}>
              <Buttons>
                <Tool $w={23}><Lines v="l" /></Tool>
                <Tool $w={23} $on><Lines v="c" /></Tool>
                <Tool $w={22}><Lines v="r" /></Tool>
              </Buttons>
              <Buttons>
                <Tool $w={22}><Indent out /></Tool>
                <Tool $w={22}><Indent /></Tool>
              </Buttons>
            </Line>
          </Stack>
          <VRule />
          <Stack $gap={11}>
            <Line><Toggle><WrapIcon />自动换行</Toggle></Line>
            <Toggle><MergeIcon />合并后居中<Caret /></Toggle>
          </Stack>
        </GroupBody>
        <Named name="对齐方式" launch />
      </Group>

      <Group $w={136}>
        <GroupBody $pad="10px 3px 0">
          <Stack $gap={11}>
            <Combo $w={128}><select aria-label="数字格式"><option>常规</option></select><Caret /></Combo>
            <Line $gap={3}>
              <Buttons>
                <Tool $w={33}><Money /><Caret /></Tool>
                <Tool $w={24}>%</Tool>
                <Tool $w={22}><Glyph $size={18}>,</Glyph></Tool>
              </Buttons>
              <Buttons>
                <Tool $w={21}><Decimals><b>←</b>.0{"\n"}.00</Decimals></Tool>
                <Tool $w={21}><Decimals>.00{"\n"}<b>→</b>.0</Decimals></Tool>
              </Buttons>
            </Line>
          </Stack>
        </GroupBody>
        <Named name="数字" launch />
      </Group>

      <Group $w={674}>
        <GroupBody $pad="0 5px 0 0">
          <BigButton $w={58}><CondFmt /><i>条件格式</i><Drop><Caret /></Drop></BigButton>
          <BigButton $w={62}><TableFmt /><i>套用</i><i>表格格式<Caret /></i></BigButton>
          <Gallery>
            <Tiles>
              <Tile>常规&nbsp; 2</Tile><Tile>常规&nbsp; 3</Tile><Tile $size={12}>常规_Sheet1</Tile><Tile $size={12}>常规_Sheet2</Tile><Tile $size={12} $on>样式 1</Tile>
              <Tile>常规</Tile><Tile $bg="#ff99cc" $c="#800080">差</Tile><Tile $bg="#ccffcc" $c="#006100">好</Tile><Tile $bg="#ffff99" $c="#993300">适中</Tile><Tile $c="#0000c8" $size={16} $u>超链接</Tile>
            </Tiles>
            <GalleryScroll>
              <button aria-label="上一行"><svg width="7" height="4"><path d="M0 4h7L3.500 0z" fill="#a5b3c9" /></svg></button>
              <button aria-label="下一行"><Caret /></button>
              <button aria-label="其他"><svg width="7" height="7" viewBox="0 0 7 7" fill="#5277ad"><path d="M0 0h7v1H0zM0 3h7L3.500 7z" /></svg></button>
            </GalleryScroll>
          </Gallery>
        </GroupBody>
        <Named name="样式" />
      </Group>

      <Group $w={134}>
        <GroupBody $pad="0 2px">
          <BigButton $w={42}><CellsIcon kind="ins" /><i>插入</i><Drop><Caret /></Drop></BigButton>
          <BigButton $w={42}><CellsIcon kind="del" /><i>删除</i><Drop><Caret /></Drop></BigButton>
          <BigButton $w={42}><CellsIcon kind="fmt" /><i>格式</i><Drop><Caret /></Drop></BigButton>
        </GroupBody>
        <Named name="单元格" />
      </Group>

      <Group $w={176}>
        <GroupBody $pad="0 2px 0 7px">
          <Stack $grow>
            <SmallButton><Glyph $size={16}>Σ</Glyph><span>&nbsp;自动求和</span><Caret /></SmallButton>
            <SmallButton><FillDown />&nbsp;填充 <Caret /></SmallButton>
            <SmallButton><Eraser />&nbsp;清除 <Caret /></SmallButton>
          </Stack>
          <BigButton $w={42}><SortIcon /><i>排序和</i><i>筛选<Caret /></i></BigButton>
          <BigButton $w={42}><Binoculars /><i>查找和</i><i>选择<Caret /></i></BigButton>
        </GroupBody>
        <Named name="编辑" />
      </Group>
    </Ribbon>
  );
}

function Grid() {
  return (
    <Sheet>
      <colgroup>
        {COLS.map((w, i) => <col key={i} style={{ width: w }} />)}
        <col />
      </colgroup>
      <thead>
        <tr>
          <Corner><svg width="11" height="11"><path d="M11 0v11H0z" fill="#e6effb" /></svg></Corner>
          {LETTERS.map((l) => <ColHead key={l} $on={l === "B"}>{l}</ColHead>)}
          <ColHead />
        </tr>
      </thead>
      <tbody>
        <tr>
          <RowHead $h={73}>78</RowHead><Gutter $thick />
          <Cell rowSpan={2} $align="center" $top={0}><T>类PTFE的板材</T></Cell>
          <Cell rowSpan={2} $top={11}><T>{"（2）各流程的烘板\n参数"}</T></Cell>
          <Cell colSpan={2} $align="center">字符后烘板</Cell>
          <Cell colSpan={2} $align="center"><T>{"F4B/F4BM类PTFE板材烘板按五\n段进行：50℃*90min→70℃\n*60min→80℃*60min→90℃\n*60min→150℃*60min"}</T></Cell>
          <Cell colSpan={3} /><Cell $thick /><Cell colSpan={13} $plain />
        </tr>
        <tr>
          <RowHead $h={37}>79</RowHead><Gutter $thick />
          <Cell colSpan={2} $align="center">喷锡前烘板</Cell>
          <Cell colSpan={2} $align="center"><T>{"按正常喷锡前烘板参数烘板：\n150℃±10℃；60±5min"}</T></Cell>
          <Cell colSpan={3} $align="center">表面工艺是喷锡时才增加此烘板流程</Cell>
          <Cell $thick /><Cell colSpan={13} $plain />
        </tr>
        <tr>
          <RowHead $h={28} $on>80</RowHead><Gutter />
          <Cell rowSpan={4} $align="center"><T>{"16.改善孔壁\n分离的问题"}</T><Selection /></Cell>
          <Cell rowSpan={3}><T>{"(1)适用范围（三个\n条件同时满足）"}</T></Cell>
          <Cell colSpan={4}><T>a.表明工艺为有铅喷锡或者无铅喷锡的双面板</T></Cell>
          <Cell colSpan={3} /><Cell $thick /><Cell colSpan={13} $plain />
        </tr>
        <tr>
          <RowHead $h={28} $on>81</RowHead><Gutter />
          <Cell colSpan={4}><T>b.成品板厚≥1.8mm</T></Cell>
          <Cell colSpan={3} /><Cell $thick /><Cell colSpan={13} $plain />
        </tr>
        <tr>
          <RowHead $h={28} $on>82</RowHead><Gutter />
          <Cell colSpan={4}><T>c.板内存在≥3mm的金属孔或者金属槽</T></Cell>
          <Cell colSpan={3} /><Cell $thick /><Cell colSpan={13} $plain />
        </tr>
        <tr>
          <RowHead $h={91} $on>83</RowHead><Gutter />
          <Cell><T>(2)生产流程</T></Cell>
          <Cell colSpan={4}>{"当同时满足以上三个条件时需在钻孔之后沉铜之前增加\n“等离子”流程，在表面工艺前增加“烘板”流程：\n前流程→钻孔→去毛刺→"}<Hot>等离子</Hot>→沉铜→……→<Hot>烘板</Hot>{"\n→喷锡（有铅或者无铅）→后流程"}</Cell>
          <Cell colSpan={3}><T>{"参数备注：\n等离子：使用PTFE沉铜前的等离子参数\n烘板：150度30分钟"}</T></Cell>
          <Cell $thick /><Cell colSpan={13} $plain />
        </tr>
        <tr>
          <RowHead $h={59}>84</RowHead><Gutter />
          <Cell rowSpan={3} $align="center"><T>{"17.FR4、PI、\n高速、高频材\n料烘板及等离\n子制作流程"}</T></Cell>
          <Cell><T>{"(1)棕化后增加“烘\n板”流程"}</T></Cell>
          <Cell colSpan={4}>{"为了满足高速板材和高频板材对信号传输和环境的要\n求，附表“特殊板材清单”中的板材型号需在棕化后增\n加“烘板”流程。"}</Cell>
          <Cell colSpan={3}><T>烘板参数：120度/1小时</T></Cell>
          <Cell rowSpan={3} $thick><CellLink href="#list">特殊板材清单</CellLink></Cell><Cell colSpan={13} $plain />
        </tr>
        <tr>
          <RowHead $h={59}>85</RowHead><Gutter />
          <Cell rowSpan={2} $align="center"><T>{"(2)沉铜前增加“等\n离子”流程"}</T></Cell>
          <Cell rowSpan={2} colSpan={4} /><Cell rowSpan={2} colSpan={3} /><Cell colSpan={13} $plain />
        </tr>
        <tr>
          <RowHead $h={41}>86</RowHead><Gutter /><Cell colSpan={13} $plain />
        </tr>
        <tr>
          <RowHead $h={87}>87</RowHead><Gutter />
          <Cell rowSpan={3} $align="center"><T>{"18 厚孔径比\n或厚板的工艺\n流程"}</T></Cell>
          <Cell><T>{"板厚孔径比大于\n12:1或者板厚"}</T><Red><T>{"≥\n4.5mm且厚径比≥\n6:1"}</T></Red></Cell>
          <Cell colSpan={4} $align="center"><T>{"工艺流程：前工序--层压--钻孔--去毛刺--去毛刺1--\n（沉铜前烘板--等离子）--沉铜－－第二次沉铜--板镀\n--板镀1--后工序"}</T></Cell>
          <Cell colSpan={3}><T>增加了一次板镀流程，线路需多补偿0.3mil</T></Cell>
          <Cell $align="center" $bold><T half={13}>{NOTE}</T></Cell><Cell colSpan={13} $plain />
        </tr>
        <tr>
          <RowHead $h={21}>88</RowHead><Gutter />
          <Cell rowSpan={2}><T>{"1 板厚孔径比≥\n8:1；\n2 最小孔径（刀\n径）≤0.25mm；\n3 刀径≤0.25mm,总\n孔数≥1万/PNL；\n4 层数≥12层"}</T></Cell>
          <Cell rowSpan={2} colSpan={4} $align="center"><T>{"工艺流程：前工序--层压--钻孔--去毛刺--去毛刺1--\n（沉铜前烘板--等离子）--沉铜--板镀--板镀1--后工\n序"}</T></Cell>
          <Cell rowSpan={2} colSpan={3}><T>增加了一次板镀流程，线路需多补偿0.3mil</T></Cell>
          <Cell rowSpan={2} $align="center" $bold><T half={13}>{NOTE}</T></Cell><Cell colSpan={13} $plain />
        </tr>
        <tr>
          <RowHead $h={97}>89</RowHead><Gutter /><Cell colSpan={13} $plain />
        </tr>
        <tr>
          <RowHead $h={107}>90</RowHead><Gutter />
          <Cell $align="center" $red><T>{"19.薄芯板以\n及含PTFE板材\n镀孔后增加磨\n板流程"}</T></Cell>
          <Cell $align="center" $red>生产流程</Cell>
          <Cell colSpan={4} $red><T>{"PTFE（含PTFE混压）、子板厚度≤0.2mm的板走镀孔，\n流程：前工序→电镀[镀孔]→外层蚀刻[退膜]→电镀\n[磨板]→后工序，“电镀[磨板]”的“生产线别”参\n数，选择“手动打磨”，备注“手工用1000目砂纸打磨\n”"}</T></Cell>
          <Cell colSpan={3} $red><T>{"EDS系统“电镀[磨板]”的“生产线别”参\n数，增加“手动打磨"}</T></Cell>
          <Cell /><Cell colSpan={13} $plain />
        </tr>
        <tr>
          <RowHead $h={80}>91</RowHead><Gutter />
          <Cell $align="center" $red><T>{"20.FR4材料特\n殊结构烘板细\n则"}</T></Cell>
          <Cell $align="center" $red><T>{"1.厚芯板，厚铜\n板，盲埋孔子板，\n混压板材结构\n烘板"}</T></Cell>
          <Cell colSpan={4} /><Cell colSpan={3} />
          <Cell $align="center"><CellLink href="#fr4"><T half={13}>{"FR4材料特殊结构烘板细\n则"}</T></CellLink></Cell><Cell colSpan={13} $plain />
        </tr>
      </tbody>
    </Sheet>
  );
}

export default function App() {
  return (
    <Screen>
      <Global />
      <OfficeButton aria-label="Office 按钮"><OfficeLogo /></OfficeButton>
      <TitleBar>
        <Blurs width="100%" height="24">
          <defs><filter id="soft"><feGaussianBlur stdDeviation="4" /></filter></defs>
          <g filter="url(#soft)">
            {BLOBS.map(([x, w, c]) => <rect key={x} x={`${(x - w / 2) / 19.2}%`} y="11" width={w} height="22" rx="8" fill={c} />)}
          </g>
        </Blurs>
        <QuickBar>
          <Bare aria-label="保存"><Save /></Bare>
          <Bare aria-label="撤消"><Undo /></Bare><Caret c="#dbe5f3" />
          <Bare aria-label="恢复"><Undo flip /></Bare><Caret c="#dbe5f3" />
        </QuickBar>
        <QuickMore aria-label="自定义快速访问工具栏"><svg width="9" height="8" viewBox="0 0 9 8" fill="none" stroke="#dbe5f3"><path d="M1 .5h7M1.500 3.500h6l-3 3z" /></svg></QuickMore>
        <Title>{"P6 CAM制作规范2022-09-07  [兼容模式] - Microsoft Excel"}</Title>
        <WindowButtons>
          <WinBtn aria-label="最小化"><svg width="11" height="4"><path d="M0 0h11v4H0z" fill="#fff" /></svg></WinBtn>
          <WinBtn aria-label="还原"><Restore c="#fff" s={12} /></WinBtn>
          <WinBtn aria-label="关闭" $close><Cross c="#fff" s={10} /></WinBtn>
        </WindowButtons>
      </TitleBar>

      <TabRow>
        {["开始", "插入", "页面布局", "公式", "数据", "审阅", "视图", "Acrobat"].map((t, i) => <Tab key={t} $on={i === 0}>{t}</Tab>)}
        <TabTools>
          <Bare aria-label="帮助"><Help /></Bare>
          <Bare aria-label="最小化窗口"><svg width="8" height="10"><path d="M0 7h8v2H0z" fill="#4b5a72" /></svg></Bare>
          <Bare aria-label="还原窗口"><Restore /></Bare>
          <Bare aria-label="关闭窗口"><Cross /></Bare>
        </TabTools>
      </TabRow>

      <RibbonBar />

      <FormulaBar>
        <NameBox><input aria-label="名称框" defaultValue="B80" /><Caret c="#111" /></NameBox>
        <FxPill><Glyph $italic $c="#5a6478">fx</Glyph></FxPill>
        <FormulaInput aria-label="编辑栏" defaultValue="16.改善孔壁分离的问题" />
        <Expand aria-label="展开编辑栏"><svg width="8" height="10" viewBox="0 0 8 10" fill="none" stroke="#111" strokeWidth="1.500"><path d="M1 1l3 3 3-3M1 5l3 3 3-3" /></svg></Expand>
      </FormulaBar>

      <Work>
        <GridArea>
          <Grid />
          <Arrow width="740" height="60" viewBox="0 0 740 60">
            <path d="M26 47L733 5" stroke="#00ff00" strokeWidth="5" />
            <path d="M0 48L27 39v17z" fill="#00ff00" />
          </Arrow>
        </GridArea>
        <VScroll>
          <SplitMark /><Space $n={5} /><Tri dir="u" /><Space $n={612} />
          <Thumb aria-label="垂直滚动"><Grip /></Thumb>
          <Space $n={92} /><Tri dir="d" />
        </VScroll>
      </Work>

      <SheetTabs>
        <NavArrows><Tri dir="l" bar /><Tri dir="l" /><Tri dir="r" /><Tri dir="r" bar /></NavArrows>
        <TabStrip>
          {TABS.map((t) => <SheetTab key={t} $on={t === "工艺流程"}><T>{t}</T></SheetTab>)}
        </TabStrip>
        <HScroll>
          <SplitMark $v /><Space $n={4} /><Tri dir="l" /><Space $n={6} />
          <Thumb $h aria-label="水平滚动"><Grip h /></Thumb>
          <Space $n={16} /><Tri dir="r" /><Space $n={8} /><SplitMark $v />
        </HScroll>
      </SheetTabs>

      <StatusBar>
        <Ready>就绪</Ready>
        <StatusRight>
          <Views>
            <button aria-label="普通"><svg width="13" height="11" viewBox="0 0 13 11" fill="#fff" stroke="#5a6478"><path d="M.5.500h12v10H.500zM.5 4h12M.5 7h12M4.500.500v10M8.500.500v10" /></svg></button>
            <button aria-label="页面布局"><svg width="11" height="12" viewBox="0 0 11 12" fill="#fff" stroke="#5a6478"><path d="M.5.500h10v11H.500zM3 3h5v6H3zM3.500 5h4M3.500 7h4" /></svg></button>
            <button aria-label="分页预览"><svg width="12" height="11" viewBox="0 0 12 11" fill="#fff" stroke="#5a6478"><path d="M.5.500h11v10H.500zM4.500.500v6H8V.5" /></svg></button>
          </Views>
          <Percent>100%</Percent>
          <Round aria-label="缩小"><svg width="8" height="2"><path d="M0 0h8v2H0z" fill="#3d4f70" /></svg></Round>
          <Zoom type="range" aria-label="显示比例" min={0} max={100} defaultValue={50} />
          <Round aria-label="放大"><svg width="8" height="8"><path d="M0 3h8v2H0zM3 0h2v8H3z" fill="#3d4f70" /></svg></Round>
        </StatusRight>
      </StatusBar>

      <TaskBar>
        <Start aria-label="开始"><Orb /></Start>
        <Task aria-label="Shell"><Shell /></Task>
        <Task aria-label="Notes"><Notes /></Task>
        <Task aria-label="Genesis"><RedG /></Task>
        <Task aria-label="Save"><Floppy /></Task>
        <Task aria-label="P"><GreenP /></Task>
        <Task aria-label="Disc 1"><Disc /></Task>
        <TaskStack><Task aria-label="X" $w={50}><BigX /></Task></TaskStack>
        <Task aria-label="Disc 2"><Disc /></Task>
        <Task aria-label="Excel" $on><ExcelIcon /></Task>
        <Task aria-label="Wing"><Wing /></Task>
        <Tray>
          <svg width="16" height="14" viewBox="0 0 16 14" fill="#d5dae2" stroke="#8b95a5"><path d="M.5 5.500h15v8H.500z" /><path d="M3 5c1-5 8 0 11-4" fill="none" stroke="#d5dae2" /><path d="M2 8h12M2 10h12M4 12h8" stroke="#56607a" strokeDasharray="1 1" /></svg>
          <Help s={15} />
          <svg width="9" height="17" viewBox="0 0 9 17" fill="none" stroke="#fff"><path d="M2.500 2V.500h6v4H7M.5 2.500h6v4h-6z" /><path d="M1 13h7l-3.500 3z" fill="#fff" stroke="none" /></svg>
          <svg width="8" height="5"><path d="M0 5h8L4 0z" fill="#fff" /></svg>
          <svg width="17" height="17" viewBox="0 0 17 17"><path d="M3 1v15" stroke="#fff" strokeWidth="1.500" /><path d="M4 2h9v8H4z" fill="#e8edf5" /><circle cx="11.500" cy="11.500" r="5" fill="#d23a2c" /><path d="M9.500 9.500l4 4M13.500 9.500l-4 4" stroke="#fff" strokeWidth="1.500" /></svg>
          <svg width="15" height="15" viewBox="0 0 15 15" fill="none" stroke="#fff"><path d="M1 5h2l4-4v13l-4-4H1z" fill="#fff" /><path d="M9 5c1 1 1 4 0 5M11 3c2 2 2 7 0 9" /></svg>
          <svg width="16" height="16" viewBox="0 0 16 16" fill="none" stroke="#fff" strokeWidth="1.300"><path d="M5 4.500h10v8H5M7 15h7M10 12.500V15M1 1v3c0 2 4 2 4 0V1M3 5v9h3M2 0v2M4 0v2" /></svg>
          <Line>
            <Clock>18:54<br />2023/3/20</Clock>
            <ShowDesktop aria-label="显示桌面" />
          </Line>
        </Tray>
      </TaskBar>
    </Screen>
  );
}
